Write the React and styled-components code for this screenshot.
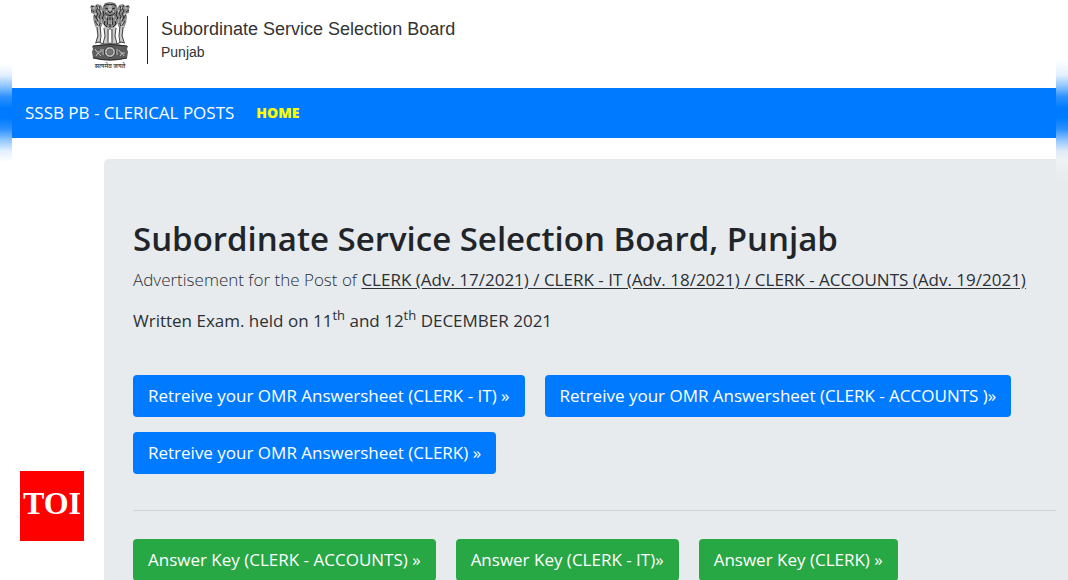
import styled, { createGlobalStyle } from "styled-components";

const omrLinks = [
	"Retreive your OMR Answersheet (CLERK - IT) »",
	"Retreive your OMR Answersheet (CLERK - ACCOUNTS )»",
	"Retreive your OMR Answersheet (CLERK) »",
];

const answerKeyLinks = [
	"Answer Key (CLERK - ACCOUNTS) »",
	"Answer Key (CLERK - IT)»",
	"Answer Key (CLERK) »",
];

export default function App() {
	return (
		<>
			<GlobalStyle />
			<Page>
				<LeftEdge />
				<Content>
					<Header>
						<Emblem />
						<HeaderText>
							<BoardName>Subordinate Service Selection Board</BoardName>
							<StateName>Punjab</StateName>
						</HeaderText>
					</Header>
					<Navbar>
						<Brand href="#">SSSB PB - CLERICAL POSTS</Brand>
						<NavLink href="#">HOME</NavLink>
					</Navbar>
					<Jumbotron>
						<Title>Subordinate Service Selection Board, Punjab</Title>
						<Lead>
							Advertisement for the Post of{" "}
							<Posts>
								CLERK (Adv. 17/2021) / CLERK - IT (Adv. 18/2021) / CLERK -
								ACCOUNTS (Adv. 19/2021)
							</Posts>
						</Lead>
						<ExamDate>
							Written Exam. held on 11<sup>th</sup> and 12<sup>th</sup> DECEMBER
							2021
						</ExamDate>
						<ButtonRow>
							{omrLinks.map((label) => (
								<ButtonLink key={label} href="#">
									{label}
								</ButtonLink>
							))}
						</ButtonRow>
						<Divider />
						<ButtonRow>
							{answerKeyLinks.map((label) => (
								<ButtonLink key={label} href="#" $color="#28a745">
									{label}
								</ButtonLink>
							))}
						</ButtonRow>
					</Jumbotron>
				</Content>
				<RightEdge />
				<Badge>TOI</Badge>
			</Page>
		</>
	);
}

function SideLion({ transform }) {
	return (
		<g transform={transform}>
			<path
				d="M1 7 0 5l2-2 3 1 2-2 4 1 2 4 1 5-1 8-2 6H6l-2-5-1-6 1-3-3-1z"
				fill="#8c8c8c"
			/>
			<path
				d="M1 4l3 1M1 8l3 2M6 3l2 3-2 3 2 3-2 3 2 4M10 4l-1 4 2 3-2 4 2 4-2 5M4 13l3 4M5 19l3 4"
				fill="none"
				stroke="#2c2c2c"
			/>
			<path
				d="M3 6h2M8 5l1 2M5 11l1 2M11 8l1 3M8 16l1 2M7 20l2 3M11 17v4"
				fill="none"
				stroke="#e4e4e4"
				strokeWidth="0.9"
			/>
		</g>
	);
}

function Emblem() {
	return (
		<EmblemSvg viewBox="0 0 40 68" role="img" aria-label="सत्यमेव जयते">
			<SideLion />
			<SideLion transform="translate(40 0) scale(-1 1)" />
			<path
				d="M13 4 15 1l5-1 5 1 2 3 1 5 1 6-2 7-3 4-4 2-4-2-3-4-2-7 1-6z"
				fill="#858585"
			/>
			<path
				d="M14 4l3-2 3 1 3-1 3 2M15 6l3 1M25 6l-3 1M18 9l2 2 2-2M15 11q5 5 10 0M13 9l1 4-2 3 3 3-1 3 3 3M27 9l-1 4 2 3-3 3 1 3-3 3M17 15l1 4-1 4M23 15l-1 4 1 4M20 15v10"
				fill="none"
				stroke="#222"
			/>
			<path
				d="M19 4h2v4h-2zM16 9l1 1M24 9l-1 1M16 14l1 2M24 14l-1 2M19 18v4M21 18v4M14 17l1 2M26 17l-1 2"
				fill="none"
				stroke="#ececec"
				strokeWidth="0.8"
			/>
			<path
				d="M6 24l1 9-1 7h4l1-7V24zM14 25l1 9-1 8h4l1-8v-8zM26 25l-1 9 1 8h-4l-1-8v-8zM34 24l-1 9 1 7h-4l-1-7V24z"
				fill="#c9c9c9"
			/>
			<path
				d="M10 24l1 10-1 7M14 26l1 8-2 8M18 27v14M22 27v14M26 26l-1 8 2 8M30 24l-1 10 1 7M7 25l1 9-2 6M33 25l-1 9 2 6"
				fill="none"
				stroke="#444"
			/>
			<path d="M5 41l4-1 4 2h5l2-1 2 1h5l4-2 4 1" fill="none" stroke="#333" />
			<path
				d="M2 44q18-4 36 0l-1 3 1 3-1 6q-17 5-34 0l-1-6 1-3z"
				fill="#5c5c5c"
			/>
			<path d="M3 44q17-3 34 0M3 56q17 4 34 0" fill="none" stroke="#292929" />
			<circle cx="20" cy="50" r="5.5" fill="#c4c4c4" stroke="#333" />
			<circle cx="20" cy="50" r="3" fill="#777" stroke="#444" strokeWidth="0.6" />
			<path
				d="M20 45v10M15 50h10M17 47l6 6M23 47l-6 6"
				stroke="#777"
				strokeWidth="0.5"
			/>
			<path
				d="M5 47l2 3h4v-3M6 54l2-3 3 3M13 47v6M27 47v6M29 48l2 3h4M30 54l2-3 2 3"
				fill="none"
				stroke="#ccc"
				strokeWidth="0.9"
			/>
			<text
				x="20"
				y="66"
				fontSize="6"
				fontWeight="600"
				textAnchor="middle"
				fill="#444"
			>
				सत्यमेव जयते
			</text>
		</EmblemSvg>
	);
}

const GlobalStyle = createGlobalStyle`
	* {
		box-sizing: border-box;
	}
	body {
		margin: 0;
		background: #fff;
		color: #2b3035;
		font-family: "Open Sans", "Noto Sans", sans-serif;
		font-size: 17px;
		line-height: 26px;
	}
`;

const Page = styled.div`
	display: grid;
	grid-template-columns: 12px minmax(0, 1fr) 12px;
	height: 100vh;
	overflow: hidden;
`;

const LeftEdge = styled.div`
	background: linear-gradient(
		#fff 64px,
		#e3f0ff 75px,
		#8fc5ff 86px,
		#2b90ff 97px,
		#007bff 108px,
		#007bff 118px,
		#2b90ff 129px,
		#8fc5ff 140px,
		#e3f0ff 151px,
		#fff 162px
	);
`;

const RightEdge = styled.div`
	background: linear-gradient(
		#fff 60px,
		#e3f0ff 75px,
		#8fc5ff 86px,
		#2b90ff 97px,
		#007bff 108px,
		#007bff 118px,
		#2b90ff 129px,
		#8fc5ff 140px,
		#dfeaf7 151px,
		#eff2f5 160px,
		#e7ebee 180px
	);
`;

const Content = styled.main`
	display: flex;
	flex-direction: column;
`;

const Header = styled.header`
	display: flex;
	align-items: flex-start;
	height: 88px;
	padding: 2px 78px 0;
	font-family: "Liberation Sans", Arial, sans-serif;
`;

const EmblemSvg = styled.svg`
	width: 40px;
	height: 68px;
	font-family: "Noto Sans Devanagari", "Noto Sans", sans-serif;
`;

const HeaderText = styled.div`
	height: 48px;
	margin: 14px 0 0 17px;
	padding-left: 13px;
	border-left: 1px solid #222;
	color: #333;
`;

const BoardName = styled.div`
	font-size: 18px;
	line-height: 26px;
`;

const StateName = styled.div`
	font-size: 14px;
	line-height: 20px;
`;

const Navbar = styled.nav`
	display: flex;
	align-items: center;
	gap: 22px;
	height: 50px;
	padding: 0 13px;
	background: #007bff;
`;

const Brand = styled.a`
	color: #fff;
	text-decoration: none;
`;

const NavLink = styled.a`
	color: #ff0;
	font-size: 14px;
	font-weight: 800;
	text-decoration: none;
`;

const Jumbotron = styled.section`
	flex: 1 0 auto;
	margin: 21px 0 0 92px;
	padding: 57px 0 56px 29px;
	border-radius: 5px 0 0 0;
	background: #e7ebee;
`;

const Title = styled.h1`
	margin: 0 0 5px;
	color: #212529;
	font-size: 33px;
	font-weight: 600;
	line-height: 46px;
`;

const Lead = styled.p`
	margin: 0 0 15px;
	font-weight: 300;
	white-space: nowrap;
`;

const Posts = styled.u`
	font-weight: 400;
	text-underline-offset: 2px;
`;

const ExamDate = styled.p`
	margin: 0 0 41px;

	sup {
		font-size: 13px;
		line-height: 0;
	}
`;

const ButtonRow = styled.div`
	display: flex;
	flex-wrap: wrap;
	gap: 15px 20px;
`;

const ButtonLink = styled.a`
	padding: 8px 15px;
	border-radius: 4px;
	background: ${({ $color }) => $color || "#007bff"};
	color: #fff;
	text-decoration: none;
	white-space: nowrap;
`;

const Divider = styled.hr`
	margin: 36px 0 28px;
	border: 0;
	border-top: 1px solid #d0d4d7;
`;

const Badge = styled.div`
	position: fixed;
	bottom: 39px;
	left: 20px;
	width: 64px;
	height: 70px;
	background: #f00;
	color: #fff;
	font-family: "Liberation Serif", "Times New Roman", serif;
	font-size: 32px;
	font-weight: 700;
	line-height: 64px;
	text-align: center;
`;
